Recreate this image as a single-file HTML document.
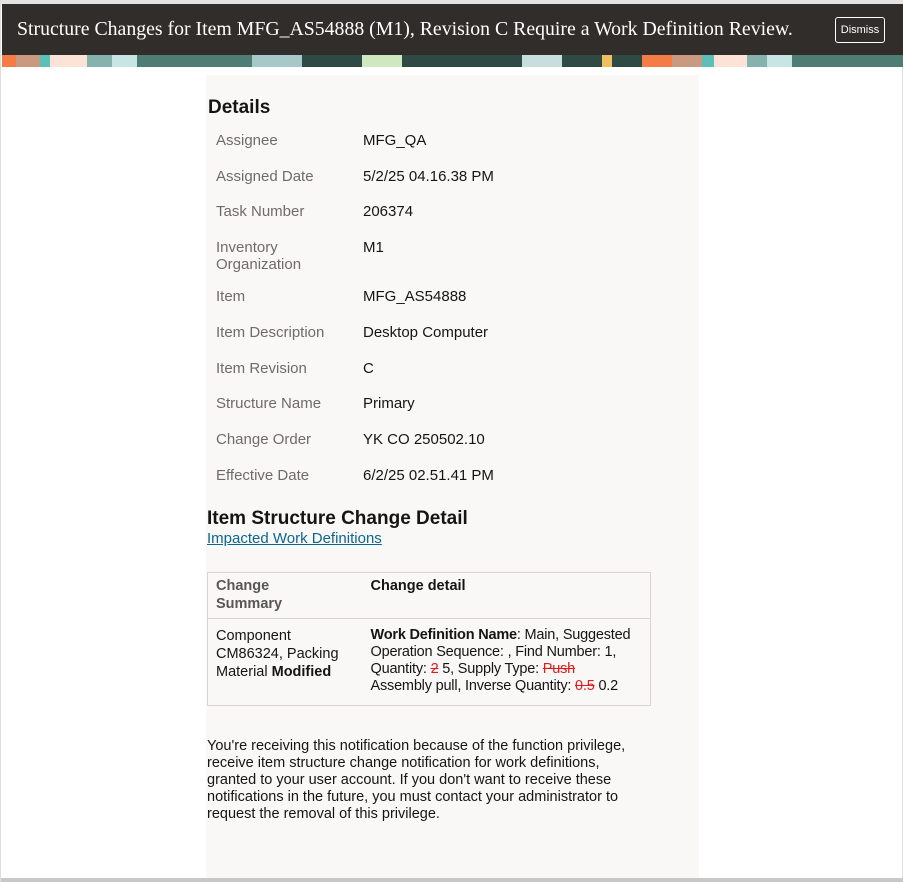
<!DOCTYPE html>
<html><head><meta charset="utf-8"><style>
*{margin:0;padding:0;box-sizing:border-box}
body{width:903px;height:882px;background:#fff;font-family:"Liberation Sans",sans-serif;position:relative;overflow:hidden;border-left:1px solid #ddd;border-right:1px solid #ddd}
.top{position:absolute;left:0;top:0;width:903px;height:4px;background:#e3e3e3}
.bar{position:absolute;left:1px;top:4px;width:901px;height:51px;background:#312d2a;color:#fff}
.bar h1{position:absolute;left:15px;top:14px;font-family:"Liberation Serif",serif;font-weight:normal;font-size:19.8px;white-space:nowrap}
.btn{position:absolute;left:833px;top:13px;width:50px;height:26px;border:1px solid #fff;border-radius:3px;font-size:11px;line-height:24px;text-align:center}
.band{position:absolute;left:1px;top:55px;width:901px;height:12px;background:linear-gradient(90deg,#f47d45 0,#f47d45 14px,#c99a80 14px,#c99a80 38px,#5cc0b8 38px,#5cc0b8 48px,#fde2d8 48px,#fde2d8 85px,#86b2ae 85px,#86b2ae 110px,#c8e5e5 110px,#c8e5e5 135px,#4f7d73 135px,#4f7d73 250px,#a7c8c8 250px,#a7c8c8 300px,#2f4a45 300px,#2f4a45 360px,#d0e8c0 360px,#d0e8c0 400px,#2f4a45 400px,#2f4a45 520px,#c8dede 520px,#c8dede 560px,#2f4a45 560px,#2f4a45 600px,#f0c060 600px,#f0c060 610px,#2f4a45 610px,#2f4a45 640px,#f47d45 640px,#f47d45 670px,#c99a80 670px,#c99a80 700px,#5cc0b8 700px,#5cc0b8 712px,#fde2d8 712px,#fde2d8 745px,#86b2ae 745px,#86b2ae 765px,#c8e5e5 765px,#c8e5e5 790px,#4f7d73 790px)}
.panel{position:absolute;left:205px;top:75px;width:493px;height:803px;background:#f9f8f6}
.bottom{position:absolute;left:0;top:878px;width:903px;height:4px;background:#c8c8c8}
.t{position:absolute;white-space:nowrap;font-size:15px;color:#161513}
.l{color:#6f6b68}
h2{position:absolute;font-size:19px;font-weight:bold;color:#161513;white-space:nowrap}
table{position:absolute;left:206px;top:572px;width:444px;border-collapse:collapse;font-size:14.5px;color:#161513;line-height:18px;white-space:nowrap}
td{border:1px solid #d8d5d2;vertical-align:top;padding:3px 8px}
tr.h td{border-left:none;border-right:none}
tr.h td:first-child{border-left:1px solid #d8d5d2}
tr.h td:last-child{border-right:1px solid #d8d5d2}
tr.b td{border-left:none;border-right:none}
tr.b td:first-child{border-left:1px solid #d8d5d2}
tr.b td:last-child{border-right:1px solid #d8d5d2}
.s{color:#e01b1b;text-decoration:line-through}
.p{position:absolute;left:206px;top:738px;width:480px;font-size:14.5px;line-height:17px;color:#161513;white-space:nowrap}
a{position:absolute;left:206px;top:530px;font-size:15px;color:#0b6790;text-decoration:underline}
</style></head><body>
<div class="top"></div>
<div class="bar"><h1>Structure Changes for Item MFG_AS54888 (M1), Revision C Require a Work Definition Review.</h1><div class="btn">Dismiss</div></div>
<div class="band"></div>
<div class="panel"></div>
<h2 style="left:207px;top:97px">Details</h2>
<div class="t l" style="left:215px;top:132px">Assignee</div><div class="t" style="left:362px;top:132px">MFG_QA</div>
<div class="t l" style="left:215px;top:168px">Assigned Date</div><div class="t" style="left:362px;top:168px">5/2/25 04.16.38 PM</div>
<div class="t l" style="left:215px;top:203px">Task Number</div><div class="t" style="left:362px;top:203px">206374</div>
<div class="t l" style="left:215px;top:239px;line-height:17px">Inventory<br>Organization</div><div class="t" style="left:362px;top:239px">M1</div>
<div class="t l" style="left:215px;top:288px">Item</div><div class="t" style="left:362px;top:288px">MFG_AS54888</div>
<div class="t l" style="left:215px;top:324px">Item Description</div><div class="t" style="left:362px;top:324px">Desktop Computer</div>
<div class="t l" style="left:215px;top:360px">Item Revision</div><div class="t" style="left:362px;top:360px">C</div>
<div class="t l" style="left:215px;top:395px">Structure Name</div><div class="t" style="left:362px;top:395px">Primary</div>
<div class="t l" style="left:215px;top:431px">Change Order</div><div class="t" style="left:362px;top:431px">YK CO 250502.10</div>
<div class="t l" style="left:215px;top:467px">Effective Date</div><div class="t" style="left:362px;top:467px">6/2/25 02.51.41 PM</div>
<h2 style="left:206px;top:508px">Item Structure Change Detail</h2>
<a>Impacted Work Definitions</a>
<table>
<tr class="h"><td style="width:155px;height:46px;color:#5a5653;font-weight:bold;padding-top:4px">Change<br>Summary</td><td style="font-weight:bold;padding-top:4px">Change detail</td></tr>
<tr class="b"><td style="padding:8px 8px 10px;line-height:18px">Component<br>CM86324, Packing<br>Material <b>Modified</b></td><td style="padding:8px 8px 10px;line-height:17px;letter-spacing:-0.2px"><b>Work Definition Name</b>: Main, Suggested<br>Operation Sequence: , Find Number: 1,<br>Quantity: <span class="s">2</span> 5, Supply Type: <span class="s">Push</span><br>Assembly pull, Inverse Quantity: <span class="s">0.5</span> 0.2</td></tr>
</table>
<div class="p">You're receiving this notification because of the function privilege,<br>receive item structure change notification for work definitions,<br>granted to your user account. If you don't want to receive these<br>notifications in the future, you must contact your administrator to<br>request the removal of this privilege.</div>
<div class="bottom"></div>
</body></html>
